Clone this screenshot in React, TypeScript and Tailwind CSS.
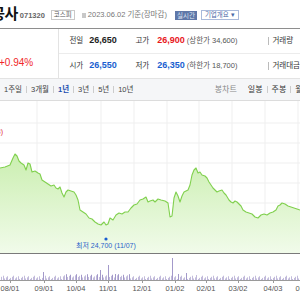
const pts: [number, number][] = [
  [0, 168], [5, 167], [10, 165], [13, 158], [15, 154], [17, 156], [19, 161], [21, 163], [24, 165], [26, 170],
  [28, 163], [30, 164], [32, 172], [35, 171], [38, 173], [40, 174], [42, 180], [45, 182], [48, 184], [51, 186],
  [54, 185], [56, 188], [58, 189], [60, 187], [62, 193], [64, 197], [66, 192], [68, 190], [71, 191], [74, 192],
  [76, 195], [78, 200], [80, 210], [83, 212], [86, 214], [89, 218], [92, 219], [95, 222], [98, 224], [101, 225],
  [104, 222], [106, 225], [108, 224], [110, 218], [113, 220], [116, 215], [119, 213], [122, 214], [125, 212], [128, 212],
  [131, 208], [134, 205], [137, 204], [140, 200], [143, 199], [146, 197], [148, 202], [150, 201], [153, 200], [155, 202],
  [158, 199], [161, 200], [165, 201], [168, 203], [170, 217], [172, 216], [174, 198], [176, 192], [178, 196], [180, 202],
  [182, 196], [184, 192], [186, 191], [188, 190], [190, 185], [192, 175], [194, 170], [196, 168], [198, 173], [200, 172],
  [202, 175], [205, 176], [207, 178], [209, 182], [211, 185], [213, 188], [215, 190], [217, 192], [219, 191], [222, 190],
  [224, 193], [226, 195], [229, 200], [231, 202], [233, 203], [235, 201], [237, 202], [239, 204], [241, 206], [243, 210],
  [246, 212], [249, 213], [252, 214], [255, 217], [258, 218], [261, 215], [264, 214], [267, 215], [270, 213], [273, 212],
  [276, 210], [278, 206], [280, 205], [282, 203], [285, 204], [288, 206], [291, 207], [294, 208], [297, 209], [300, 210],
]

const line = pts.map(([x, y], i) => `${i ? 'L' : 'M'}${x} ${y}`).join(' ')
const area = `${line} L300 253 L0 253 Z`

const spikes: Record<number, number> = { 43: 8, 95: 7, 100: 10, 108: 15, 115: 6, 125: 6, 172: 22, 178: 6, 186: 7, 196: 5 }
const vols = Array.from({ length: 199 }, (_, i) => {
  const x = 1 + Math.round(i * 1.5)
  let h = 1 + ((i * 37 + 11) % 7) * 0.55
  if (x > 62 && x < 130) h += 1.5
  if (spikes[x] !== undefined) h = spikes[x]
  return { x, h }
})

const dates = [
  { x: 10, t: '08/01' }, { x: 44, t: '09/01' }, { x: 76, t: '10/04' }, { x: 108, t: '11/01' }, { x: 142, t: '12/01' },
  { x: 175, t: '01/02' }, { x: 206, t: '02/01' }, { x: 238, t: '03/02' }, { x: 273, t: '04/03' }, { x: 305, t: '05/02' },
]

const hGrid = [123, 143, 163, 183, 203, 223, 243]
const vGrid = [37, 69, 101, 134, 167, 199, 232, 265, 298]

const tabs = ['1주일', '3개월', '1년', '3년', '5년', '10년']

export default function App() {
  return (
    <div className="w-[300px] h-[300px] overflow-hidden bg-white font-['Liberation_Sans','Noto_Sans_CJK_KR',sans-serif] text-[#333]">
      {/* header */}
      <div className="h-[29px] border-b border-[#8e8e8e] flex items-center whitespace-nowrap overflow-hidden">
        <span className="ml-[-62px] text-[15px] font-semibold text-[#111] tracking-[-0.5px]">지역난방공사</span>
        <span className="ml-[2px] text-[7.5px] font-bold text-[#666] mt-[3px]">071320</span>
        <span className="ml-[6px] mt-[2px] border border-[#c9c9c9] px-[2px] text-[6.5px] leading-[8px] text-[#555]">코스피</span>
        <span className="ml-[7px] mt-[2px] w-[4px] h-[5px] bg-[#c8c8c8]" />
        <span className="ml-[2px] mt-[2px] text-[7.5px] text-[#777]">2023.06.02 기준(장마감)</span>
        <span className="ml-[8px] mt-[2px] bg-[#5f77a8] px-[2px] text-[6.5px] leading-[9px] text-[#dfe6f3]">실시간</span>
        <span className="ml-[4px] mt-[2px] border border-[#a9badb] px-[3px] text-[6.5px] leading-[8px] text-[#4b69a6]">기업개요 ▾</span>
      </div>

      {/* price summary */}
      <div className="h-[50px] flex border-b border-[#e3e3e3]">
        <div className="w-[67px] border-r border-[#e3e3e3] flex items-end pb-[8px] overflow-hidden whitespace-nowrap">
          <span className="ml-[-1px] text-[10px] text-[#f0272a]">+0.94%</span>
        </div>
        <div className="flex-1 flex flex-col whitespace-nowrap">
          {[
            { l1: '전일', v1: '26,650', c1: 'text-[#222]', l2: '고가', v2: '26,900', c2: 'text-[#e8171c]', s: '(상한가 34,600)', l3: '거래량' },
            { l1: '시가', v1: '26,550', c1: 'text-[#1a5fd0]', l2: '저가', v2: '26,350', c2: 'text-[#1a5fd0]', s: '(하한가 18,700)', l3: '거래대금' },
          ].map((r, i) => (
            <div key={r.l1} className={`flex-1 flex items-center text-[7.5px] ${i === 0 ? 'border-b border-[#ececec]' : ''}`}>
              <div className="w-[76px] pl-[10px] flex items-center">
                <span className="text-[#333]">{r.l1}</span>
                <span className={`ml-[6px] text-[9px] font-bold ${r.c1}`}>{r.v1}</span>
              </div>
              <div className="w-[133px] flex items-center">
                <span className="text-[#333]">{r.l2}</span>
                <span className={`ml-[8px] text-[9px] font-bold ${r.c2}`}>{r.v2}</span>
                <span className="ml-[2px] text-[#555]">{r.s}</span>
              </div>
              <div className="flex items-center">
                <span className="w-px h-[8px] bg-[#bbb]" />
                <span className="ml-[3px] text-[#333]">{r.l3}</span>
              </div>
            </div>
          ))}
        </div>
      </div>

      {/* period tabs */}
      <div className="h-[22px] bg-[#f5f6f8] border-b border-[#dcdcdc] flex items-center justify-between text-[7.5px] whitespace-nowrap">
        <div className="flex items-center pl-[4px]">
          {tabs.map((t, i) => (
            <div key={t} className="flex items-center">
              {i > 0 && <span className="mx-[4px] w-px h-[7px] bg-[#ccc]" />}
              <span className={t === '1년' ? 'text-[#1d4fb0] font-semibold' : 'text-[#444]'}>{t}</span>
            </div>
          ))}
        </div>
        <div className="flex items-center mr-[-10px] text-[8px]">
          <span className="text-[#888] mr-[11px]">봉차트</span>
          <span className="text-[#333]">일봉</span>
          <span className="mx-[4px] w-px h-[7px] bg-[#ccc]" />
          <span className="text-[#333]">주봉</span>
          <span className="mx-[4px] w-px h-[7px] bg-[#ccc]" />
          <span className="text-[#333]">월봉</span>
        </div>
      </div>

      {/* chart */}
      <svg width="300" height="199" viewBox="0 101 300 199" className="block">
        <defs>
          <linearGradient id="fill" x1="0" y1="150" x2="0" y2="253" gradientUnits="userSpaceOnUse">
            <stop offset="0" stopColor="#c9eeae" />
            <stop offset="1" stopColor="#f1fbea" />
          </linearGradient>
        </defs>
        {hGrid.map((y) => (
          <line key={y} x1="0" x2="300" y1={y} y2={y} stroke="#efefef" strokeWidth="1" />
        ))}
        {vGrid.map((x) => (
          <line key={x} x1={x} x2={x} y1="101" y2="253" stroke="#efefef" strokeWidth="1" />
        ))}
        <path d={area} fill="url(#fill)" />
        <path d={line} fill="none" stroke="#80d04e" strokeWidth="1.1" strokeLinejoin="round" />
        <text x="3" y="134" textAnchor="end" fontSize="7" fill="#e0262e" fontFamily="Liberation Sans, Noto Sans CJK KR, sans-serif">
          최고 28,050 (06/13)
        </text>
        <circle cx="106" cy="239" r="1.6" fill="#1a5fd0" />
        <text x="76" y="248" fontSize="7" fill="#2a62c9" fontFamily="Liberation Sans, Noto Sans CJK KR, sans-serif">
          최저 24,700 (11/07)
        </text>
        <line x1="0" x2="300" y1="253.5" y2="253.5" stroke="#7a7a7a" strokeWidth="1" />
        {vols.map((v) => (
          <rect key={v.x} x={v.x} y={280 - v.h} width="0.8" height={v.h} fill={v.h > 5 ? '#8d80bd' : '#b3abd3'} />
        ))}
        <line x1="0" x2="300" y1="280.5" y2="280.5" stroke="#9a9a9a" strokeWidth="1" />
        {dates.map((d) => (
          <g key={d.t}>
            <line x1={d.x + 0.5} x2={d.x + 0.5} y1="280" y2="283" stroke="#9a9a9a" strokeWidth="1" />
            <text x={d.x} y="291" textAnchor="middle" fontSize="7.5" fill="#555" fontFamily="Liberation Sans, sans-serif">
              {d.t}
            </text>
          </g>
        ))}
      </svg>
    </div>
  )
}
